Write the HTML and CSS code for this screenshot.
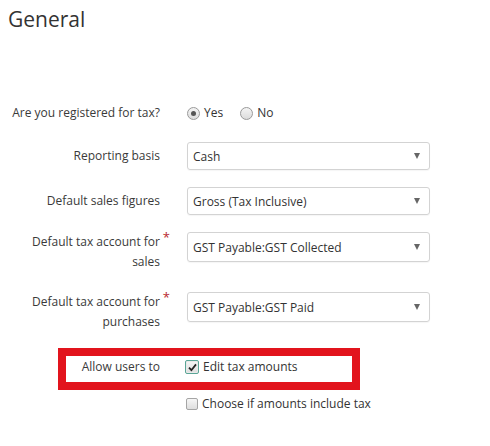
FILE: index.html
```html
<!DOCTYPE html>
<html>
<head>
<meta charset="utf-8">
<link rel="stylesheet" href="styles.css">
</head>
<body>
<div class="page">
  <h1 class="title">General</h1>

  <div class="row radio-row">
    <div class="label">Are you registered for tax?</div>
    <div class="control radios">
      <span class="radio checked"></span><span class="opt opt-yes">Yes</span>
      <span class="radio"></span><span class="opt">No</span>
    </div>
  </div>

  <div class="row">
    <div class="label">Reporting basis</div>
    <div class="control"><div class="select"><span>Cash</span><span class="arrow"></span></div></div>
  </div>

  <div class="row">
    <div class="label">Default sales figures</div>
    <div class="control"><div class="select"><span>Gross (Tax Inclusive)</span><span class="arrow"></span></div></div>
  </div>

  <div class="row multi">
    <div class="label"><span class="req">Default tax account for</span><br>sales</div>
    <div class="control"><div class="select tall"><span>GST Payable:GST Collected</span><span class="arrow"></span></div></div>
  </div>

  <div class="row multi">
    <div class="label"><span class="req">Default tax account for</span><br>purchases</div>
    <div class="control"><div class="select tall"><span>GST Payable:GST Paid</span><span class="arrow"></span></div></div>
  </div>

  <div class="row check-row highlight">
    <div class="label">Allow users to</div>
    <div class="control checks">
      <span class="check checked"><svg width="9" height="9" viewBox="0 0 9 9"><path d="M1 4.6 L3.4 7.2 L8 1.4" fill="none" stroke="#222" stroke-width="1.8"/></svg></span><span class="opt">Edit tax amounts</span>
    </div>
  </div>

  <div class="row check-row second">
    <div class="label"></div>
    <div class="control checks">
      <span class="check"></span><span class="opt">Choose if amounts include tax</span>
    </div>
  </div>
</div>
</body>
</html>
```
FILE: styles.css
```css
*, *::before, *::after { box-sizing: border-box; }
html, body { margin: 0; padding: 0; background: #fff; }
body {
  font-family: "Open Sans", "Liberation Sans", sans-serif;
  font-size: 12px;
  color: #333;
}
.page { padding: 5px 0 0 8px; width: 490px; }
.title {
  margin: 0 0 70px 0;
  font-size: 21px;
  line-height: 28px;
  font-weight: 400;
  color: #333;
}
.row {
  display: flex;
  align-items: center;
  margin-bottom: 17px;
}
.row.multi { align-items: flex-start; margin-bottom: 20px; }
.radio-row { margin-bottom: 19px; }
.label {
  width: 152px;
  flex: none;
  text-align: right;
  line-height: 20px;
  color: #3a3a3a;
}
.req { position: relative; }
.req::after {
  content: "*";
  position: absolute;
  right: -10px;
  top: -6px;
  color: #b8282e;
  font-size: 13px;
}
.control { margin-left: 26px; display: flex; align-items: center; }
.radios, .checks { line-height: 20px; }
.radio {
  width: 13px; height: 13px;
  border-radius: 50%;
  border: 1px solid #9a9a9a;
  background: linear-gradient(#f4f4f4, #dcdcdc);
  display: inline-block;
  position: relative;
  margin-left: 1px;
}
.radio.checked::after {
  content: "";
  position: absolute;
  left: 3px; top: 3px;
  width: 5px; height: 5px;
  border-radius: 50%;
  background: #555;
}
.opt { margin-left: 4px; }
.opt-yes { margin-right: 16px; }
.select {
  width: 243px;
  height: 28px;
  margin-left: 1px;
  border: 1px solid #d3d3d3;
  border-radius: 3px;
  display: flex;
  align-items: center;
  justify-content: space-between;
  padding: 0 9px 0 5px;
  color: #333;
  box-shadow: 0 1px 1px rgba(0,0,0,0.04);
}
.select.tall { height: 30px; }
.arrow {
  width: 0; height: 0;
  border-left: 3.5px solid transparent;
  border-right: 3.5px solid transparent;
  border-top: 6px solid #666;
}
.check {
  width: 12px; height: 12px;
  border: 1px solid #a5a5a5;
  border-radius: 2px;
  background: linear-gradient(#f6f6f6, #dedede);
  display: inline-flex;
  align-items: center;
  justify-content: center;
  margin-left: 0;
}
.check.checked {
  width: 14px; height: 14px;
  margin-left: -1px;
  border: 1px solid #5aa596;
  box-shadow: inset 0 0 0 1px #e9e9e9;
}
.check-row .opt { margin-left: 4px; }
.highlight {
  position: relative;
  margin-top: 25px;
  margin-bottom: 17px;
}
.highlight::before {
  content: "";
  position: absolute;
  left: 50px;
  top: -9px;
  width: 302px;
  height: 42px;
  border: 8px solid #e2141d;
  pointer-events: none;
}
```
